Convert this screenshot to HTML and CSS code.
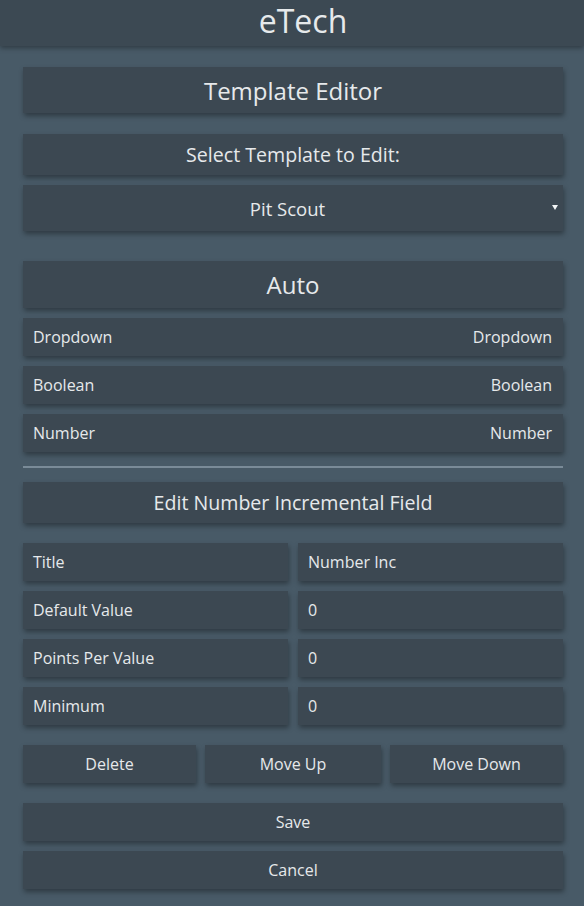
FILE: index.html
```html
<!DOCTYPE html>
<html>
<head>
<meta charset="utf-8">
<link rel="stylesheet" href="styles.css">
</head>
<body>
<header class="topbar"><span class="brand">eTech</span></header>
<main class="content">
  <div class="card title-card">Template Editor</div>
  <div class="card label-card gap-21">Select Template to Edit:</div>
  <div class="card select-card gap-10">
    <span>Pit Scout</span>
    <svg class="caret" width="6" height="5" viewBox="0 0 6 5"><path d="M0 0H6L3 5Z" fill="#f2f4f5"/></svg>
  </div>

  <div class="card title-card gap-30">Auto</div>
  <div class="card row gap-10"><span>Dropdown</span><span>Dropdown</span></div>
  <div class="card row gap-10"><span>Boolean</span><span>Boolean</span></div>
  <div class="card row gap-10"><span>Number</span><span>Number</span></div>

  <hr class="divider">

  <div class="card label-card">Edit Number Incremental Field</div>

  <div class="field-grid">
    <div class="card cell">Title</div><div class="card cell">Number Inc</div>
    <div class="card cell">Default Value</div><div class="card cell">0</div>
    <div class="card cell">Points Per Value</div><div class="card cell">0</div>
    <div class="card cell">Minimum</div><div class="card cell">0</div>
  </div>

  <div class="btn-row">
    <div class="card btn">Delete</div>
    <div class="card btn">Move Up</div>
    <div class="card btn">Move Down</div>
  </div>

  <div class="card btn wide gap-20">Save</div>
  <div class="card btn wide gap-10">Cancel</div>
</main>
</body>
</html>
```

FILE: styles.css
```css
html, body {
  margin: 0;
  padding: 0;
}
body {
  background: #485a67;
  color: #e6e9eb;
  font-family: "Open Sans", "DejaVu Sans", sans-serif;
  width: 584px;
  height: 906px;
  overflow: hidden;
}
.topbar {
  height: 46px;
  background: #3c4953;
  box-shadow: 0 2px 5px rgba(0, 0, 0, 0.35);
  display: flex;
  justify-content: center;
  padding-left: 22px;
  position: relative;
  z-index: 1;
}
.brand {
  font-size: 32px;
  line-height: 40px;
  padding-top: 1px;
}
.content {
  padding: 21px 21px 0 23px;
  display: flex;
  flex-direction: column;
}
.card {
  background: #3c4852;
  box-shadow: 1px 3px 5px rgba(0, 0, 0, 0.35);
}
.gap-10 { margin-top: 10px; }
.gap-20 { margin-top: 20px; }
.gap-21 { margin-top: 21px; }
.gap-30 { margin-top: 30px; }
.title-card {
  height: 46px;
  display: flex;
  align-items: center;
  justify-content: center;
  font-size: 24px;
}
.title-card.gap-30 { height: 47px; }
.label-card {
  height: 41px;
  display: flex;
  align-items: center;
  justify-content: center;
  font-size: 19.6px;
}
.select-card {
  height: 46px;
  display: flex;
  align-items: center;
  justify-content: center;
  padding-right: 11px;
  font-size: 18.5px;
  position: relative;
}
.caret {
  position: absolute;
  right: 5px;
  top: 20px;
}
.row {
  height: 38px;
  display: flex;
  align-items: center;
  justify-content: space-between;
  padding: 0 11px 0 10px;
  font-size: 16px;
}
.divider {
  border: 0;
  height: 2px;
  background: #7a8b98;
  margin: 14px 0;
}
.field-grid {
  margin-top: 20px;
  display: grid;
  grid-template-columns: 1fr 1fr;
  column-gap: 10px;
  row-gap: 10px;
}
.cell {
  height: 38px;
  display: flex;
  align-items: center;
  padding-left: 10px;
  font-size: 16px;
}
.btn-row {
  margin-top: 20px;
  display: grid;
  grid-template-columns: 173px 176px 173px;
  column-gap: 9px;
}
.btn {
  height: 38px;
  display: flex;
  align-items: center;
  justify-content: center;
  font-size: 16px;
}
```
